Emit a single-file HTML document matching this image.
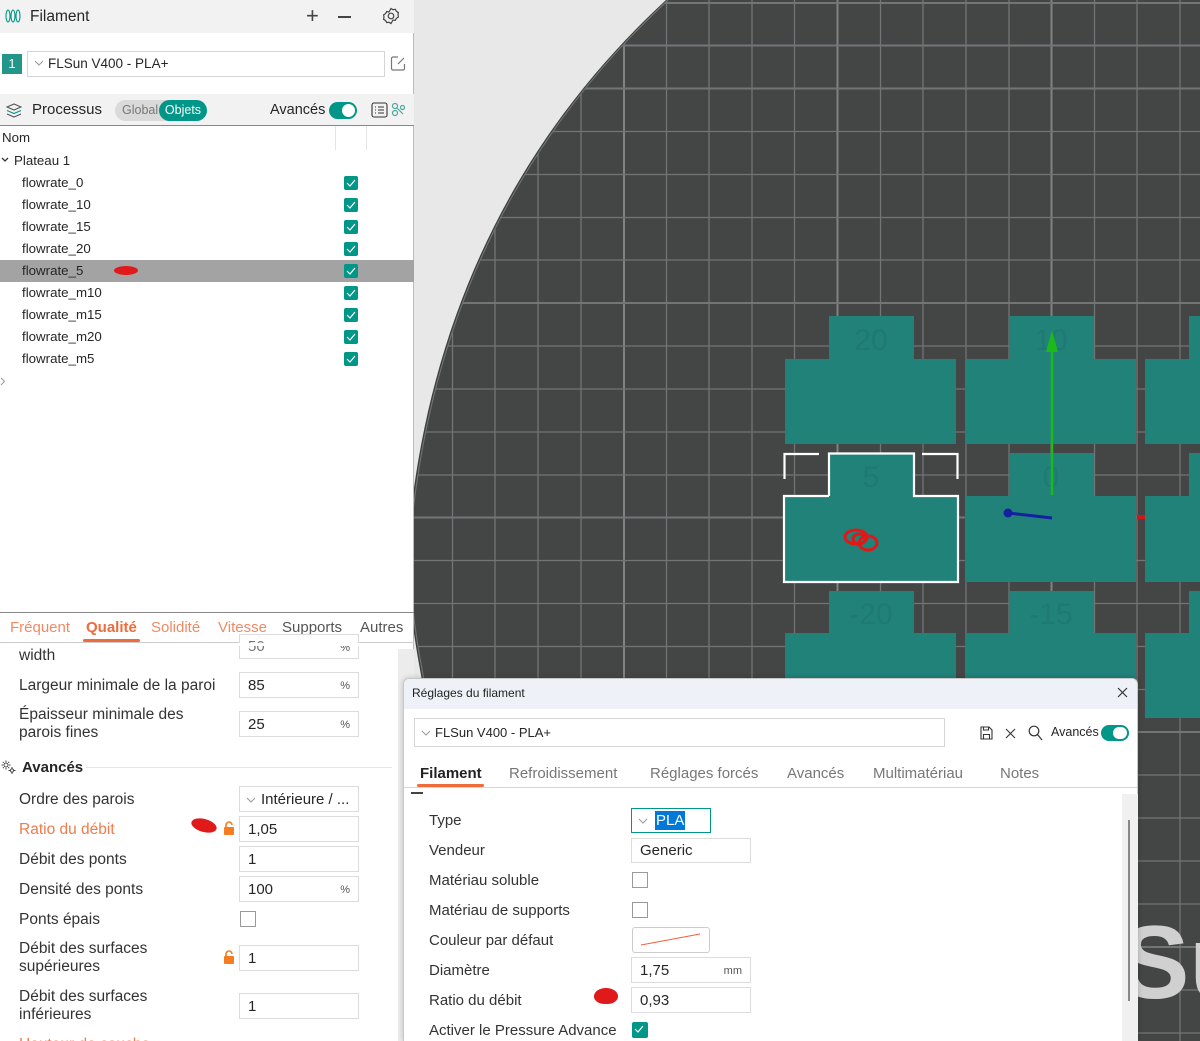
<!DOCTYPE html>
<html><head><meta charset="utf-8">
<style>
*{margin:0;padding:0;box-sizing:border-box}
html,body{width:1200px;height:1041px;overflow:hidden}
body{position:relative;background:#e8e8e8;font-family:"Liberation Sans",sans-serif;color:#262626}
.a{position:absolute;white-space:nowrap}
.t{font-size:13.3px}
.cb{position:absolute;width:14px;height:14px;background:#009688;border-radius:2px}
.cb svg{position:absolute;left:2px;top:2px}
.inp{position:absolute;border:1px solid #dcdcdc;background:#fff;font-size:15px;padding-left:8px;display:flex;align-items:center}
.pct{position:absolute;right:8px;top:7px;font-size:11px;color:#555}
.lab{position:absolute;font-size:15.5px;color:#333;line-height:18px}
.dl{position:absolute;font-size:15px;color:#333;left:429px}
</style></head><body>

<svg class="a" style="left:0;top:0" width="1200" height="1041">
<defs>
<clipPath id="bed"><path d="M668 0 C560 100 440 260 412 520 C405 600 420 660 440 760 L500 1041 L1200 1041 L1200 0 Z"/></clipPath>
</defs>
<path d="M666 0 C558 100 438 260 410 520 C403 600 418 660 438 760 L498 1041 L1200 1041 L1200 0 Z" fill="#3d3f3f"/>
<g clip-path="url(#bed)">
<rect x="0" y="0" width="1200" height="1041" fill="#444646"/>
<g stroke="#727575" stroke-width="1.3">
<line x1="452.5" y1="0" x2="452.5" y2="1041"/><line x1="495" y1="0" x2="495" y2="1041"/><line x1="538" y1="0" x2="538" y2="1041"/><line x1="581" y1="0" x2="581" y2="1041"/><line x1="624" y1="0" x2="624" y2="1041" stroke="#808383" stroke-width="2"/><line x1="666.5" y1="0" x2="666.5" y2="1041"/><line x1="709" y1="0" x2="709" y2="1041"/><line x1="752" y1="0" x2="752" y2="1041"/><line x1="794.5" y1="0" x2="794.5" y2="1041"/><line x1="837.5" y1="0" x2="837.5" y2="1041" stroke="#808383" stroke-width="2"/><line x1="880.5" y1="0" x2="880.5" y2="1041"/><line x1="923" y1="0" x2="923" y2="1041"/><line x1="966" y1="0" x2="966" y2="1041"/><line x1="1009" y1="0" x2="1009" y2="1041"/><line x1="1051.5" y1="0" x2="1051.5" y2="1041" stroke="#808383" stroke-width="2"/><line x1="1094.5" y1="0" x2="1094.5" y2="1041"/><line x1="1137" y1="0" x2="1137" y2="1041"/><line x1="1180" y1="0" x2="1180" y2="1041"/>
<line x1="0" y1="3" x2="1200" y2="3" stroke-width="2"/><line x1="0" y1="45.5" x2="1200" y2="45.5" stroke-width="2"/><line x1="0" y1="88.5" x2="1200" y2="88.5" stroke-width="2"/><line x1="0" y1="131.5" x2="1200" y2="131.5"/><line x1="0" y1="174.5" x2="1200" y2="174.5"/><line x1="0" y1="217.5" x2="1200" y2="217.5"/><line x1="0" y1="260" x2="1200" y2="260"/><line x1="0" y1="303" x2="1200" y2="303" stroke-width="2"/><line x1="0" y1="346" x2="1200" y2="346"/><line x1="0" y1="389" x2="1200" y2="389"/><line x1="0" y1="432" x2="1200" y2="432"/><line x1="0" y1="475" x2="1200" y2="475"/><line x1="0" y1="517.5" x2="1200" y2="517.5" stroke-width="2"/><line x1="0" y1="560.5" x2="1200" y2="560.5"/><line x1="0" y1="603.5" x2="1200" y2="603.5"/><line x1="0" y1="646.5" x2="1200" y2="646.5"/><line x1="0" y1="689.5" x2="1200" y2="689.5"/><line x1="0" y1="732" x2="1200" y2="732" stroke-width="2"/><line x1="0" y1="775" x2="1200" y2="775"/><line x1="0" y1="818" x2="1200" y2="818"/><line x1="0" y1="861" x2="1200" y2="861"/><line x1="0" y1="904" x2="1200" y2="904"/><line x1="0" y1="947" x2="1200" y2="947" stroke-width="2"/><line x1="0" y1="990" x2="1200" y2="990"/><line x1="0" y1="1033" x2="1200" y2="1033"/>
</g>
</g>
<path d="M668 0 C560 100 440 260 412 520 C405 600 420 660 440 760 L500 1041" fill="none" stroke="#707272" stroke-width="1.2"/>
<g fill="#21827a">
<rect x="829" y="316" width="85" height="43"/><rect x="785" y="359" width="171" height="85"/>
<rect x="1009" y="316" width="85" height="43"/><rect x="965" y="359" width="171" height="85"/>
<rect x="1189" y="316" width="11" height="43"/><rect x="1145" y="359" width="55" height="85"/>
<rect x="829" y="453" width="85" height="43"/><rect x="784" y="496" width="174" height="86"/>
<rect x="1009" y="453" width="85" height="43"/><rect x="965" y="496" width="171" height="86"/>
<rect x="1189" y="453" width="11" height="43"/><rect x="1145" y="496" width="55" height="86"/>
<rect x="829" y="591" width="85" height="42"/><rect x="785" y="633" width="171" height="60"/>
<rect x="1009" y="591" width="85" height="42"/><rect x="965" y="633" width="171" height="60"/>
<rect x="1189" y="591" width="11" height="42"/><rect x="1145" y="633" width="55" height="85"/>
</g>
<g font-family="Liberation Sans" font-size="30" fill="#1e7a73" text-anchor="middle">
<text x="871" y="350">20</text><text x="1051" y="350">10</text><text x="871" y="487">5</text><text x="1051" y="487">0</text><text x="871" y="624">-20</text><text x="1051" y="624">-15</text>
</g>
<g fill="none" stroke="#fff" stroke-width="2.2">
<path d="M784.5 479V454H819"/><path d="M922 454H957.5V479"/>
<path d="M829 496V453.5H914V496H958V582H784V496H829"/>
</g>
<line x1="1052" y1="350" x2="1052" y2="495" stroke="#1cb81c" stroke-width="2.5"/>
<path d="M1046 352L1052 330L1058 352Z" fill="#1cb81c"/>
<line x1="1008" y1="513" x2="1052" y2="518" stroke="#1420a0" stroke-width="3"/>
<circle cx="1008" cy="513" r="4.5" fill="#1420a0"/>
<rect x="1137" y="515" width="8" height="4" fill="#d01818"/>
<g fill="none" stroke="#e01818" stroke-width="3"><ellipse cx="856" cy="537" rx="11" ry="7"/><ellipse cx="868" cy="543" rx="9" ry="7"/><ellipse cx="859" cy="539" rx="6" ry="5"/></g>
<text x="1120" y="998" font-family="Liberation Sans" font-weight="bold" font-size="104" fill="#d0d0d0">Su</text>
</svg>

<!-- LEFT PANEL -->
<div class="a" style="left:0;top:0;width:414px;height:1041px;background:#fff;border-right:1px solid #bbb"></div>
<div class="a" style="left:0;top:0;width:414px;height:33px;background:#f2f2f2"></div>
<svg class="a" style="left:5px;top:8px" width="16" height="16" viewBox="0 0 16 16" fill="none" stroke="#009688" stroke-width="1.1"><ellipse cx="3" cy="8" rx="2" ry="6"/><ellipse cx="8" cy="8" rx="2" ry="6"/><ellipse cx="13" cy="8" rx="2" ry="6"/></svg>
<div class="a" style="left:30px;top:8px;font-size:15.5px;color:#262626">Filament</div>
<div class="a" style="left:306px;top:3px;font-size:22px;color:#444;font-weight:300">+</div>
<div class="a" style="left:338px;top:16px;width:13px;height:1.5px;background:#444"></div>
<svg class="a" style="left:382px;top:7px" width="18" height="18" viewBox="0 0 18 18" fill="none" stroke="#444" stroke-width="1.2"><path d="M9 1.5l2 1.2 2.3-.4 1.1 2 2 1.3-.4 2.4.4 2-2 1.3-1.1 2-2.3-.3L9 16.5l-2-1.2-2.3.3-1.1-2-2-1.3.4-2.3-.4-2.1 2-1.3 1.1-2 2.3.4z"/><circle cx="9" cy="9" r="2.8"/></svg>

<div class="a" style="left:2px;top:54px;width:20px;height:20px;background:#23968a;color:#fff;font-size:13px;text-align:center;line-height:20px">1</div>
<div class="a" style="left:27px;top:51px;width:358px;height:26px;border:1px solid #d6d6d6"></div>
<svg class="a" style="left:34px;top:60px" width="10" height="6"><path d="M1 1l4 4 4-4" fill="none" stroke="#999"/></svg>
<div class="a" style="left:48px;top:56px;font-size:13.5px">FLSun V400 - PLA+</div>
<svg class="a" style="left:390px;top:55px" width="16" height="16" fill="none" stroke="#777" stroke-width="1.2"><path d="M8 2H3a1.5 1.5 0 0 0-1.5 1.5v10A1.5 1.5 0 0 0 3 15h10a1.5 1.5 0 0 0 1.5-1.5V9"/><path d="M8 9l6-6"/></svg>

<div class="a" style="left:0;top:94px;width:414px;height:31px;background:#f2f2f2"></div>
<svg class="a" style="left:5px;top:101px" width="17" height="17" fill="none" stroke="#555" stroke-width="1.1"><path d="M2 6l7-3 7 3-7 3z"/><path d="M2 9.5l7 3 7-3" stroke="#009688"/><path d="M2 13l7 3 7-3"/></svg>
<div class="a" style="left:32px;top:101px;font-size:15px">Processus</div>
<div class="a" style="left:115px;top:100px;width:92px;height:21px;border-radius:11px;background:#dadada"></div>
<div class="a" style="left:122px;top:103px;font-size:12.5px;color:#777">Global</div>
<div class="a" style="left:159px;top:100px;width:48px;height:21px;border-radius:11px;background:#009688;color:#fff;font-size:12.5px;text-align:center;line-height:21px">Objets</div>
<div class="a" style="left:270px;top:102px;font-size:14.5px">Avancés</div>
<div class="a" style="left:329px;top:102px;width:28px;height:17px;border-radius:9px;background:#009688"></div>
<div class="a" style="left:342px;top:104px;width:13px;height:13px;border-radius:7px;background:#fff"></div>
<svg class="a" style="left:371px;top:102px" width="17" height="16" fill="none" stroke="#333" stroke-width="1.1"><rect x="1" y="1" width="15" height="14" rx="2"/><path d="M4 5h1M7 5h6M4 8h1M7 8h6M4 11h1M7 11h6"/></svg>
<svg class="a" style="left:391px;top:102px" width="15" height="15" fill="none" stroke="#4aa89e" stroke-width="1.2"><circle cx="4" cy="4" r="2.5"/><circle cx="4" cy="11" r="2.5"/><circle cx="11.5" cy="5.5" r="2"/><path d="M6 6l6 6"/></svg>

<div class="a" style="left:0;top:125px;width:414px;height:1px;background:#888"></div>
<div class="a" style="left:0;top:125px;width:414px;height:488px;border-bottom:1px solid #888"></div>
<div class="a" style="left:335px;top:126px;width:1px;height:24px;background:#e4e4e4"></div>
<div class="a" style="left:366px;top:126px;width:1px;height:24px;background:#e4e4e4"></div>
<div class="a t" style="left:2px;top:130px">Nom</div>
<svg class="a" style="left:1px;top:157px" width="8" height="6"><path d="M1 1l3 3 3-3" fill="none" stroke="#333" stroke-width="1.3"/></svg>
<div class="a t" style="left:14px;top:153px">Plateau 1</div>
<div class="a" style="left:0;top:260px;width:414px;height:22px;background:#a3a3a3"></div>
<div class="a t" style="left:22px;top:175px">flowrate_0</div>
<div class="a t" style="left:22px;top:197px">flowrate_10</div>
<div class="a t" style="left:22px;top:219px">flowrate_15</div>
<div class="a t" style="left:22px;top:241px">flowrate_20</div>
<div class="a t" style="left:22px;top:263px">flowrate_5</div>
<div class="a t" style="left:22px;top:285px">flowrate_m10</div>
<div class="a t" style="left:22px;top:307px">flowrate_m15</div>
<div class="a t" style="left:22px;top:329px">flowrate_m20</div>
<div class="a t" style="left:22px;top:351px">flowrate_m5</div>
<div class="a" style="left:114px;top:266px;width:24px;height:9px;border-radius:50%;background:#e01a1a"></div>
<svg width="0" height="0" style="position:absolute"><defs><g id="ck"><path d="M1 5l3 3 5-6" fill="none" stroke="#fff" stroke-width="1.2"/></g></defs></svg>
<div class="cb" style="left:344px;top:176px"><svg width="10" height="10"><use href="#ck"/></svg></div>
<div class="cb" style="left:344px;top:198px"><svg width="10" height="10"><use href="#ck"/></svg></div>
<div class="cb" style="left:344px;top:220px"><svg width="10" height="10"><use href="#ck"/></svg></div>
<div class="cb" style="left:344px;top:242px"><svg width="10" height="10"><use href="#ck"/></svg></div>
<div class="cb" style="left:344px;top:264px"><svg width="10" height="10"><use href="#ck"/></svg></div>
<div class="cb" style="left:344px;top:286px"><svg width="10" height="10"><use href="#ck"/></svg></div>
<div class="cb" style="left:344px;top:308px"><svg width="10" height="10"><use href="#ck"/></svg></div>
<div class="cb" style="left:344px;top:330px"><svg width="10" height="10"><use href="#ck"/></svg></div>
<div class="cb" style="left:344px;top:352px"><svg width="10" height="10"><use href="#ck"/></svg></div>
<svg class="a" style="left:0;top:377px" width="6" height="9"><path d="M1 1l3.5 3.5L1 8" fill="none" stroke="#999"/></svg>

<div class="a" style="left:10px;top:619px;font-size:15px;color:#f08a64">Fréquent</div>
<div class="a" style="left:86px;top:619px;font-size:15px;color:#ef6b3a;font-weight:bold">Qualité</div>
<div class="a" style="left:83px;top:639px;width:57px;height:3px;border-radius:2px;background:#ef6b3a"></div>
<div class="a" style="left:151px;top:619px;font-size:15px;color:#f08a64">Solidité</div>
<div class="a" style="left:218px;top:619px;font-size:15px;color:#f08a64">Vitesse</div>
<div class="a" style="left:282px;top:619px;font-size:15px;color:#555">Supports</div>
<div class="a" style="left:360px;top:619px;font-size:15px;color:#555">Autres</div>
<div class="a" style="left:0;top:642px;width:414px;height:1px;background:#ccc"></div>

<div class="a" style="left:398px;top:649px;width:16px;height:392px;background:#ececec"></div>
<div class="lab" style="left:19px;top:647px">width</div>
<div class="inp" style="left:239px;top:634px;width:120px;height:25px;color:#777">50<span class="pct">%</span></div>
<div class="a" style="left:0;top:643px;width:398px;height:3px;background:#fff"></div>
<div class="lab" style="left:19px;top:677px">Largeur minimale de la paroi</div>
<div class="inp" style="left:239px;top:672px;width:120px;height:26px">85<span class="pct">%</span></div>
<div class="lab" style="left:19px;top:706px">Épaisseur minimale des<br>parois fines</div>
<div class="inp" style="left:239px;top:711px;width:120px;height:26px">25<span class="pct">%</span></div>
<svg class="a" style="left:0;top:759px" width="17" height="16" fill="none" stroke="#444" stroke-width="1"><circle cx="6" cy="6" r="2"/><path d="M6 1.5v1.5M6 9v1.5M1.5 6H3M9 6h1.5M2.8 2.8l1 1M8.2 8.2l1 1M9.2 2.8l-1 1M3.8 8.2l-1 1"/><circle cx="12" cy="11.5" r="1.6"/><path d="M12 8v1.5M12 13.5V15M8.5 11.5H10M14 11.5h1.5"/></svg>
<div class="a" style="left:22px;top:759px;font-size:15px;font-weight:bold;color:#262626">Avancés</div>
<div class="a" style="left:86px;top:767px;width:306px;height:1px;background:#e6e6e6"></div>
<div class="lab" style="left:19px;top:791px">Ordre des parois</div>
<div class="inp" style="left:239px;top:786px;width:120px;height:26px;padding-left:21px">Intérieure / ...</div>
<svg class="a" style="left:246px;top:797px" width="10" height="6"><path d="M1 1l4 4 4-4" fill="none" stroke="#999"/></svg>
<div class="lab" style="left:19px;top:821px;color:#f07b4c">Ratio du débit</div>
<div class="a" style="left:191px;top:819px;width:26px;height:13px;border-radius:50%;background:#e01a1a;transform:rotate(15deg)"></div>
<svg class="a" style="left:223px;top:821px" width="12" height="14"><path d="M3 6V4a3 3 0 0 1 6 0" fill="none" stroke="#f57c1f" stroke-width="1.6"/><rect x="1" y="6" width="10" height="8" rx="1" fill="#f57c1f"/></svg>
<div class="inp" style="left:239px;top:816px;width:120px;height:26px">1,05</div>
<div class="lab" style="left:19px;top:851px">Débit des ponts</div>
<div class="inp" style="left:239px;top:846px;width:120px;height:26px">1</div>
<div class="lab" style="left:19px;top:881px">Densité des ponts</div>
<div class="inp" style="left:239px;top:876px;width:120px;height:26px">100<span class="pct">%</span></div>
<div class="lab" style="left:19px;top:911px">Ponts épais</div>
<div class="a" style="left:240px;top:911px;width:16px;height:16px;border:1px solid #999"></div>
<div class="lab" style="left:19px;top:940px">Débit des surfaces<br>supérieures</div>
<svg class="a" style="left:223px;top:950px" width="12" height="14"><path d="M3 6V4a3 3 0 0 1 6 0" fill="none" stroke="#f57c1f" stroke-width="1.6"/><rect x="1" y="6" width="10" height="8" rx="1" fill="#f57c1f"/></svg>
<div class="inp" style="left:239px;top:945px;width:120px;height:26px">1</div>
<div class="lab" style="left:19px;top:988px">Débit des surfaces<br>inférieures</div>
<div class="inp" style="left:239px;top:993px;width:120px;height:26px">1</div>
<div class="lab" style="left:19px;top:1036px;color:#f07b4c">Hauteur de couche</div>

<!-- DIALOG -->
<div class="a" style="left:403px;top:678px;width:735px;height:363px;background:#fff;border:1px solid #c8c8c8;border-bottom:none;border-radius:6px 6px 0 0;box-shadow:0 0 6px rgba(0,0,0,.2)"></div>
<div class="a" style="left:404px;top:679px;width:733px;height:30px;background:#eef2f8;border-radius:6px 6px 0 0"></div>
<div class="a" style="left:412px;top:686px;font-size:12px;color:#222">Réglages du filament</div>
<svg class="a" style="left:1117px;top:687px" width="11" height="11"><path d="M1 1l9 9M10 1l-9 9" stroke="#333" stroke-width="1.2"/></svg>
<div class="a" style="left:414px;top:718px;width:531px;height:29px;border:1px solid #d6d6d6"></div>
<svg class="a" style="left:421px;top:730px" width="10" height="6"><path d="M1 1l4 4 4-4" fill="none" stroke="#999"/></svg>
<div class="a" style="left:435px;top:725px;font-size:13px">FLSun V400 - PLA+</div>
<svg class="a" style="left:980px;top:726px" width="13" height="14" fill="none" stroke="#333" stroke-width="1.1"><path d="M1 1h8l3 3v9H1z"/><path d="M3.5 1v3h5V1M3.5 13V8.5h6V13"/></svg>
<svg class="a" style="left:1005px;top:728px" width="11" height="11"><path d="M1 1l9 9M10 1l-9 9" stroke="#333" stroke-width="1.1"/></svg>
<svg class="a" style="left:1028px;top:725px" width="15" height="16" fill="none" stroke="#333" stroke-width="1.2"><circle cx="6" cy="6" r="4.8"/><path d="M9.5 9.5l4.5 5.5"/></svg>
<div class="a" style="left:1051px;top:725px;font-size:12.5px">Avancés</div>
<div class="a" style="left:1101px;top:725px;width:28px;height:16px;border-radius:8px;background:#009688"></div>
<div class="a" style="left:1113px;top:727px;width:14px;height:12px;border-radius:6px;background:#fff"></div>
<div class="a" style="left:420px;top:765px;font-size:15px;font-weight:bold;color:#222">Filament</div>
<div class="a" style="left:417px;top:784px;width:67px;height:3px;border-radius:2px;background:#ef6b3a"></div>
<div class="a" style="left:509px;top:765px;font-size:15px;color:#777">Refroidissement</div>
<div class="a" style="left:650px;top:765px;font-size:15px;color:#777">Réglages forcés</div>
<div class="a" style="left:787px;top:765px;font-size:15px;color:#777">Avancés</div>
<div class="a" style="left:873px;top:765px;font-size:15px;color:#777">Multimatériau</div>
<div class="a" style="left:1000px;top:765px;font-size:15px;color:#777">Notes</div>
<div class="a" style="left:404px;top:787px;width:733px;height:1px;background:#d8d8d8"></div>
<div class="a" style="left:1122px;top:794px;width:16px;height:247px;background:#f0f0f0"></div>
<div class="a" style="left:1128px;top:820px;width:2px;height:181px;background:#888"></div>
<div class="a" style="left:411px;top:792px;width:12px;height:1.5px;background:#444"></div>

<div class="dl" style="top:812px">Type</div>
<div class="a" style="left:631px;top:808px;width:80px;height:25px;border:1px solid #009688"></div>
<svg class="a" style="left:638px;top:818px" width="10" height="6"><path d="M1 1l4 4 4-4" fill="none" stroke="#999"/></svg>
<div class="a" style="left:655px;top:811px;height:19px;background:#0078d7;color:#fff;font-size:15px;padding:0 1px;line-height:19px">PLA</div>
<div class="dl" style="top:842px">Vendeur</div>
<div class="inp" style="left:631px;top:838px;width:120px;height:25px">Generic</div>
<div class="dl" style="top:872px">Matériau soluble</div>
<div class="a" style="left:632px;top:872px;width:16px;height:16px;border:1px solid #999"></div>
<div class="dl" style="top:902px">Matériau de supports</div>
<div class="a" style="left:632px;top:902px;width:16px;height:16px;border:1px solid #999"></div>
<div class="dl" style="top:932px">Couleur par défaut</div>
<div class="a" style="left:632px;top:927px;width:78px;height:26px;border:1px solid #ccc;border-radius:3px;background:#fff"></div>
<svg class="a" style="left:640px;top:932px" width="62" height="15"><path d="M1 13L60 2" stroke="#f06040" stroke-width="1"/></svg>
<div class="dl" style="top:962px">Diamètre</div>
<div class="inp" style="left:631px;top:957px;width:120px;height:26px">1,75<span class="pct">mm</span></div>
<div class="dl" style="top:992px">Ratio du débit</div>
<div class="a" style="left:594px;top:988px;width:24px;height:16px;border-radius:50% 50% 45% 45%;background:#e01a1a"></div>
<div class="inp" style="left:631px;top:987px;width:120px;height:26px">0,93</div>
<div class="dl" style="top:1022px">Activer le Pressure Advance</div>
<div class="cb" style="left:632px;top:1022px;width:16px;height:16px"><svg width="12" height="12"><use href="#ck"/></svg></div>
</body></html>
